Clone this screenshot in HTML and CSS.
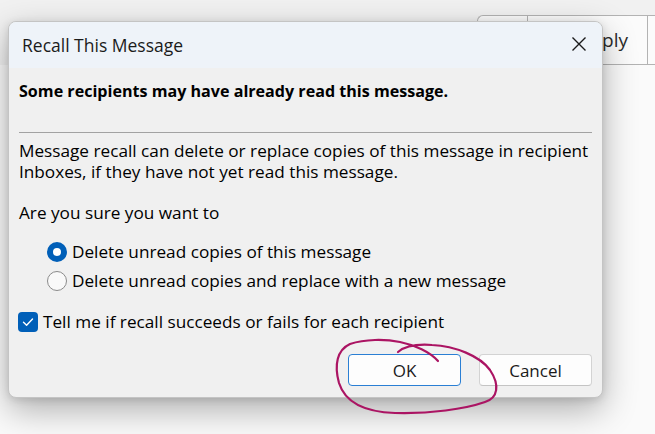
FILE: index.html
```html
<!DOCTYPE html>
<html lang="en">
<head>
<meta charset="utf-8">
<title>Recall This Message</title>
<link rel="stylesheet" href="styles.css">
</head>
<body>
<div class="app">
  <div class="topbar">
    <div class="tbgroup">
      <div class="tbcell tb-first"></div>
      <div class="tbcell tb-reply">Reply</div>
      <div class="tbcell tb-last"></div>
    </div>
  </div>
  <div class="content"></div>
</div>

<div class="dialog">
  <div class="titlebar">
    <span class="title">Recall This Message</span>
    <svg class="close" width="16" height="16" viewBox="0 0 16 16"><path d="M1.5 1.5 L14.5 14.5 M14.5 1.5 L1.5 14.5" stroke="#1a1a1a" stroke-width="1.4" fill="none"/></svg>
  </div>
  <div class="body">
    <div class="warn">Some recipients may have already read this message.</div>
    <div class="sep"></div>
    <p class="para">Message recall can delete or replace copies of this message in recipient<br>Inboxes, if they have not yet read this message.</p>
    <p class="ask">Are you sure you want to</p>
    <div class="options">
      <div class="opt"><span class="radio on"></span><span>Delete unread copies of this message</span></div>
      <div class="opt"><span class="radio"></span><span>Delete unread copies and replace with a new message</span></div>
    </div>
    <div class="check-row">
      <span class="checkbox"><svg width="20" height="20" viewBox="0 0 20 20"><path d="M5.5 10.2 L8.6 13.2 L14.5 7" stroke="#fff" stroke-width="1.4" fill="none" stroke-linecap="round" stroke-linejoin="round"/></svg></span>
      <span>Tell me if recall succeeds or fails for each recipient</span>
    </div>
    <div class="buttons">
      <div class="btn primary">OK</div>
      <div class="btn">Cancel</div>
    </div>
  </div>
</div>

<svg class="annot" width="655" height="434" viewBox="0 0 655 434">
  <path d="M398 352 C405 346 418 344 432 345 C455 346 480 356 490 370 C500 385 498 398 485 402 C465 409 430 414 395 413 C365 412 345 402 339 383 C334 365 337 350 350 344 C365 339 385 339 400 342 C415 345 430 352 438 361" stroke="#ab1463" stroke-width="2.2" fill="none" stroke-linecap="round" stroke-linejoin="round"/>
</svg>
</body>
</html>
```
FILE: styles.css
```css
html, body {
  margin: 0;
  padding: 0;
}
body {
  width: 655px;
  height: 434px;
  overflow: hidden;
  position: relative;
  font-family: "Open Sans", "Noto Sans", sans-serif;
  background: #f8f8f8;
}
.app {
  display: flex;
  flex-direction: column;
  height: 434px;
}
.topbar {
  height: 65px;
  padding-top: 15px;
  box-sizing: border-box;
  background: #f1f1f1;
  display: flex;
  justify-content: flex-end;
}
.tbgroup {
  display: flex;
  margin-right: -23px;
  border: 1px solid #b3b3b3;
  border-right: none;
  border-radius: 6px 0 0 0;
  background: #fbfbfb;
  height: 50px;
  box-sizing: border-box;
}
.tbcell {
  border-right: 1px solid #b3b3b3;
}
.tb-first { width: 49px; }
.tb-reply {
  width: 120px;
  display: flex;
  align-items: center;
  justify-content: flex-end;
  padding-right: 19px;
  box-sizing: border-box;
  font-size: 19px;
  color: #2b2b2b;
}
.tb-last { width: 30px; border-right: none; }
.content {
  flex: 1;
  background: #fafafa;
}

.dialog {
  position: absolute;
  left: 8px;
  top: 21px;
  width: 595px;
  height: 377px;
  box-sizing: border-box;
  border: 1px solid #c4c4c4;
  border-radius: 8px;
  background: #f0f0f0;
  overflow: hidden;
  box-shadow: 0 12px 34px rgba(0,0,0,0.30), 0 2px 8px rgba(0,0,0,0.12);
  display: flex;
  flex-direction: column;
  color: #000;
}
.titlebar {
  height: 46px;
  background: #eef3f9;
  display: flex;
  align-items: center;
  justify-content: space-between;
  padding: 0 15px 0 13px;
  flex: none;
}
.title {
  font-size: 17.5px;
  color: #1b1b1b;
  line-height: 46px;
}
.close {
  display: block;
  margin-top: -2px;
}
.body {
  padding: 0 10px 10px 10px;
  font-size: 17.2px;
  line-height: 21px;
  display: flex;
  flex-direction: column;
  flex: 1;
}
.warn {
  font-weight: 700;
  font-size: 16.1px;
  margin-top: 13px;
}
.sep {
  height: 1px;
  background: #a2a2a2;
  margin-top: 30px;
}
.para {
  margin: 7px 0 0 0;
}
.ask {
  margin: 20px 0 0 0;
}
.options {
  margin-top: 14px;
  padding-left: 28px;
}
.opt, .check-row {
  display: flex;
  align-items: center;
  height: 29px;
  gap: 5px;
}
.radio {
  width: 20px;
  height: 20px;
  box-sizing: border-box;
  border-radius: 50%;
  border: 1px solid #8b8b8b;
  background: #f9f9f9;
  flex: none;
}
.radio.on {
  border: 6px solid #005fb8;
  background: #ffffff;
}
.check-row {
  margin-top: 12px;
  margin-left: -1px;
}
.checkbox {
  width: 20px;
  height: 20px;
  border-radius: 4px;
  background: #005fb8;
  flex: none;
  display: block;
}
.checkbox svg { display: block; }
.buttons {
  margin-top: 18px;
  display: flex;
  justify-content: flex-end;
  gap: 18px;
}
.btn {
  width: 113px;
  height: 32px;
  box-sizing: border-box;
  border: 1px solid #d3d3d3;
  border-bottom-color: #c4c4c4;
  border-radius: 4px;
  background: #fdfdfd;
  display: flex;
  align-items: center;
  justify-content: center;
  font-size: 17px;
  color: #1a1a1a;
}
.btn.primary {
  border: 1.5px solid #2a7fd4;
}
.annot {
  position: absolute;
  left: 0;
  top: 0;
  pointer-events: none;
}
```
